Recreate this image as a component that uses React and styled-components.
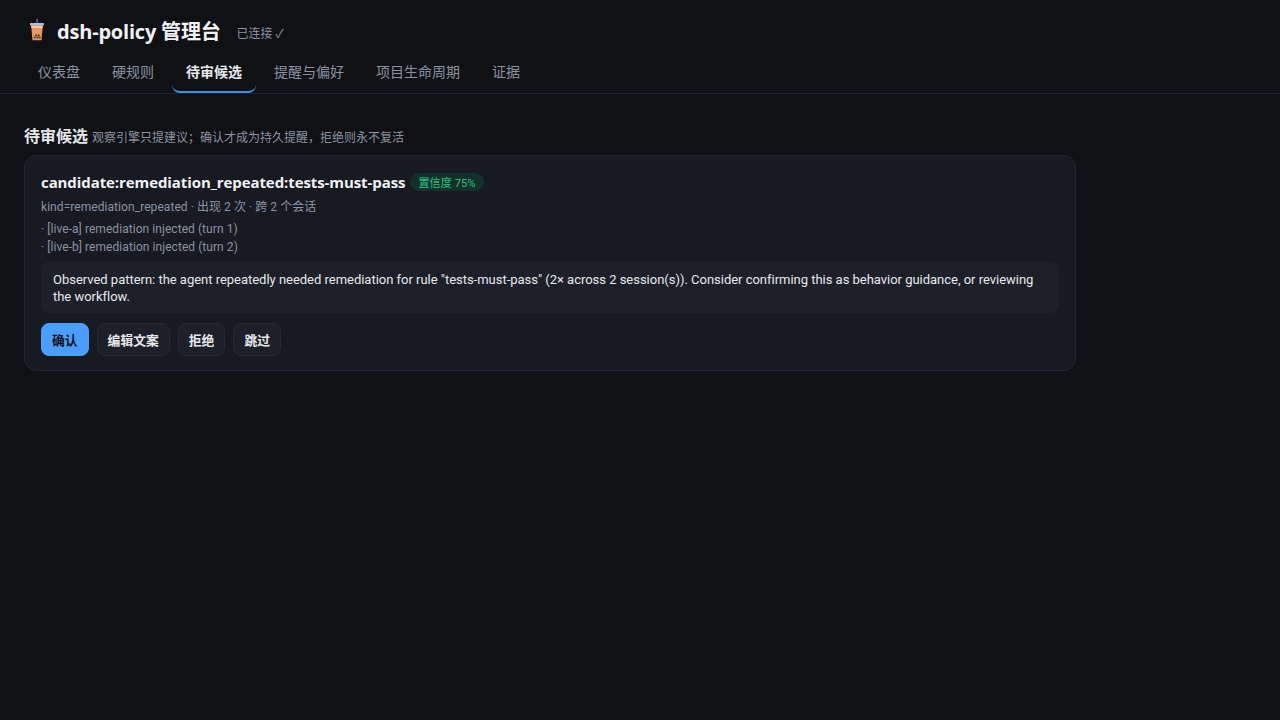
import React from 'react';
import styled, { createGlobalStyle } from 'styled-components';

const Global = createGlobalStyle`
	* { box-sizing: border-box; }
	html, body { margin: 0; height: 100%; background: #0f1115; }
	body {
		font-family: Roboto, "Noto Sans CJK SC", sans-serif;
		color: #e6e8ec;
		overflow: hidden;
	}
`;

const Header = styled('header')`
	height: 94px;
	padding: 15px 24px 0;
	border-bottom: 1px solid #1f2530;
`;

const TitleRow = styled('div')`
	display: flex;
	align-items: center;
	height: 30px;
`;

const Logo = styled('svg')`
	width: 20px;
	height: 22px;
	margin: 0 10px 0 3px;
`;

const Title = styled('h1')`
	margin: 0;
	font-family: "Open Sans", "Noto Sans CJK SC", sans-serif;
	font-size: 20px;
	font-weight: 700;
	letter-spacing: -0.2px;
	color: #f0f2f5;
`;

const Status = styled('span')`
	margin-left: 16px;
	margin-top: 4px;
	font-size: 12px;
	color: #8b93a1;
`;

const Tabs = styled('nav')`
	display: flex;
	gap: 4px;
	margin-top: 6px;
`;

const Tab = styled('button')`
	height: 42px;
	padding: 0 14px;
	background: none;
	border: 0;
	border-bottom: 2px solid ${(p) => (p.$active ? '#3f8fe0' : 'transparent')};
	border-radius: 8px;
	font: inherit;
	font-size: 14px;
	font-weight: ${(p) => (p.$active ? 700 : 400)};
	color: ${(p) => (p.$active ? '#e6e8ec' : '#8b93a1')};
`;

const Main = styled('main')`
	width: 1100px;
	padding: 29px 24px 0;
`;

const SectionHead = styled('div')`
	display: flex;
	align-items: baseline;
	gap: 4px;
	height: 20px;
	margin-bottom: 12px;
`;

const SectionTitle = styled('h2')`
	margin: 0;
	font-size: 16px;
	font-weight: 700;
	color: #e6e8ec;
`;

const SectionNote = styled('span')`
	font-size: 12px;
	color: #8b93a1;
`;

const Card = styled('section')`
	height: 216px;
	padding: 15px 16px;
	background: #171a21;
	border: 1px solid #22262f;
	border-radius: 12px;
`;

const CardHead = styled('div')`
	display: flex;
	align-items: center;
	gap: 5px;
	height: 22px;
`;

const CardTitle = styled('span')`
	font-family: "Open Sans", "Noto Sans CJK SC", sans-serif;
	font-size: 15px;
	font-weight: 700;
	letter-spacing: -0.087px;
	color: #f0f2f5;
`;

const Badge = styled('span')`
	padding: 1px 8px;
	border-radius: 999px;
	background: #14302a;
	font-size: 11.2px;
	color: #26c281;
`;

const Meta = styled('div')`
	margin-top: 5px;
	font-size: 12px;
	line-height: 18px;
	letter-spacing: 0.06px;
	color: #8b93a1;
`;

const Evidence = styled('div')`
	margin-top: 4px;
	font-size: 12px;
	line-height: 18px;
	letter-spacing: 0.06px;
	color: #8b93a1;
`;

const Message = styled('p')`
	margin: 6px 0 0;
	padding: 9px 12px 7px;
	height: 51px;
	background: #1d2029;
	border-radius: 8px;
	font-size: 13px;
	line-height: 17px;
	letter-spacing: -0.02px;
	color: #e6e8ec;
`;

const Actions = styled('div')`
	display: flex;
	gap: 8px;
	margin-top: 10px;
`;

const Action = styled('button')`
	height: 33px;
	padding: 0 10px;
	background: ${(p) => (p.$primary ? '#4a9eff' : '#1d2029')};
	border: 1px solid ${(p) => (p.$primary ? '#4a9eff' : '#262a34')};
	border-radius: 8px;
	font: inherit;
	font-size: 12.8px;
	font-weight: 700;
	color: ${(p) => (p.$primary ? '#0f1115' : '#e6e8ec')};
`;

const tabs = ['仪表盘', '硬规则', '待审候选', '提醒与偏好', '项目生命周期', '证据'];

function BubbleTea() {
	return (
		<Logo viewBox="0 0 20 22">
			<rect x="9.4" y="0" width="1.4" height="5" fill="#8a63b8" />
			<rect x="3" y="4" width="14" height="2.4" rx="0.6" fill="#a9bfe0" />
			<path d="M4.2 6.4h11.6l-1.2 14a1 1 0 0 1-1 .9H6.4a1 1 0 0 1-1-.9z" fill="#e8985f" />
			<path d="M4.2 6.4h11.6l-.2 2.6H4.4z" fill="#f4c9a0" />
			<circle cx="7.6" cy="18.6" r="1.1" fill="#5c3a2e" />
			<circle cx="10.4" cy="18.6" r="1.1" fill="#5c3a2e" />
			<circle cx="12.8" cy="18.6" r="1.1" fill="#5c3a2e" />
			<circle cx="9" cy="16.4" r="1.1" fill="#5c3a2e" />
			<circle cx="11.6" cy="16.4" r="1.1" fill="#5c3a2e" />
		</Logo>
	);
}

export default function App() {
	return (
		<>
			<Global />
			<Header>
				<TitleRow>
					<BubbleTea />
					<Title>dsh-policy 管理台</Title>
					<Status>已连接 ✓</Status>
				</TitleRow>
				<Tabs>
					{tabs.map((t) => (
						<Tab key={t} $active={t === '待审候选'}>{t}</Tab>
					))}
				</Tabs>
			</Header>
			<Main>
				<SectionHead>
					<SectionTitle>待审候选</SectionTitle>
					<SectionNote>观察引擎只提建议；确认才成为持久提醒，拒绝则永不复活</SectionNote>
				</SectionHead>
				<Card>
					<CardHead>
						<CardTitle>candidate:remediation_repeated:tests-must-pass</CardTitle>
						<Badge>置信度 75%</Badge>
					</CardHead>
					<Meta>kind=remediation_repeated · 出现 2 次 · 跨 2 个会话</Meta>
					<Evidence>
						<div>· [live-a] remediation injected (turn 1)</div>
						<div>· [live-b] remediation injected (turn 2)</div>
					</Evidence>
					<Message>
						Observed pattern: the agent repeatedly needed remediation for rule "tests-must-pass" (2× across 2 session(s)). Consider confirming this as behavior guidance, or reviewing the workflow.
					</Message>
					<Actions>
						<Action $primary>确认</Action>
						<Action>编辑文案</Action>
						<Action>拒绝</Action>
						<Action>跳过</Action>
					</Actions>
				</Card>
			</Main>
		</>
	);
}
